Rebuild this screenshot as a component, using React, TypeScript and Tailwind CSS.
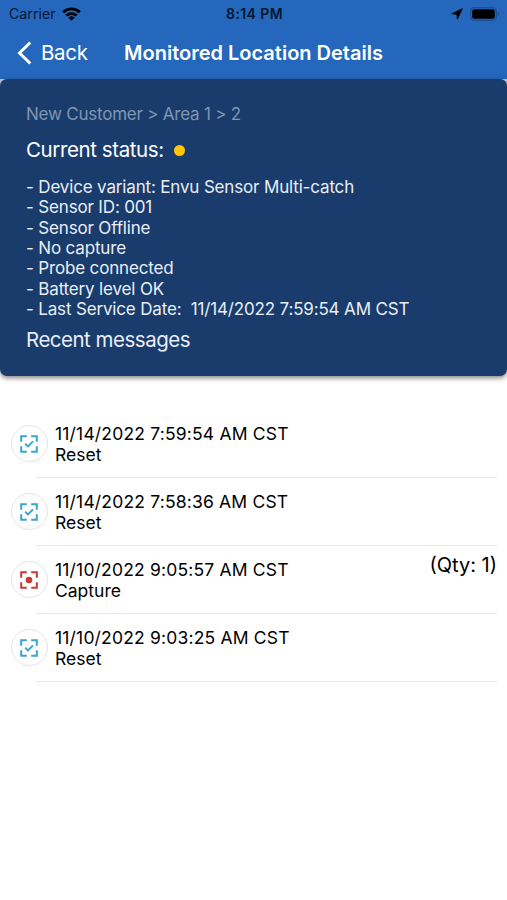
interface Message {
    id: number;
    time: string;
    type: 'Reset' | 'Capture';
    qty?: number;
}

const details = [
    'Device variant: Envu Sensor Multi-catch',
    'Sensor ID: 001',
    'Sensor Offline',
    'No capture',
    'Probe connected',
    'Battery level OK',
    'Last Service Date:  11/14/2022 7:59:54 AM CST',
];

const messages: Message[] = [
    { id: 1, time: '11/14/2022 7:59:54 AM CST', type: 'Reset' },
    { id: 2, time: '11/14/2022 7:58:36 AM CST', type: 'Reset' },
    { id: 3, time: '11/10/2022 9:05:57 AM CST', type: 'Capture', qty: 1 },
    { id: 4, time: '11/10/2022 9:03:25 AM CST', type: 'Reset' },
];

function StatusBar() {
    return (
        <div className="grid h-[27px] grid-cols-3 items-center pl-[9px] pr-[7px] text-black">
            <div className="flex items-center gap-[6px]">
                <span className="text-[14px] leading-[18px] tracking-[0.1px] text-[#06182f]">Carrier</span>
                <svg className="h-[14px] w-[19px]" viewBox="0 0 19 14" fill="none" stroke="currentColor" strokeWidth="2.7">
                    <path d="M1.2 5.2a12 12 0 0 1 16.6 0" />
                    <path d="M4.3 8.6a7.6 7.6 0 0 1 10.4 0" />
                    <path d="M9.5 13.8 6.4 10.7a4.5 4.5 0 0 1 6.2 0z" fill="currentColor" stroke="none" />
                </svg>
            </div>
            <span className="text-center text-[14px] font-semibold leading-[18px] tracking-[0.4px] text-[#06182f]">8:14 PM</span>
            <div className="flex items-center justify-end gap-[7px]">
                <svg className="h-3 w-3" viewBox="0 0 12 12" fill="currentColor" stroke="currentColor" strokeWidth=".8" strokeLinejoin="round">
                    <path d="M11.3.7.8 5.8l5.1.4.5 5z" />
                </svg>
                <svg className="h-[14px] w-[30px]" viewBox="0 0 30 14">
                    <rect x=".7" y=".7" width="25.6" height="12.6" rx="3.5" fill="none" stroke="#1b4f94" strokeWidth="1.2" />
                    <rect x="2.2" y="2.2" width="22.6" height="9.6" rx="2" fill="#000" />
                    <path d="M27.6 4.8c1.9.8 1.9 3.6 0 4.4z" fill="#1b4f94" />
                </svg>
            </div>
        </div>
    );
}

function MessageIcon({ type }: { type: Message['type'] }) {
    const color = type === 'Reset' ? 'text-[#3ba3d0]' : 'text-[#c83a32]';
    return (
        <div className={`flex h-[37px] w-[37px] shrink-0 items-center justify-center rounded-full border border-[#e4e4e4] bg-white ${color}`}>
            <svg className="h-[18px] w-[18px]" viewBox="0 0 18 18" fill="none" stroke="currentColor" strokeWidth="2">
                <path d="M1.2 6.8V1.2h5.6M11.2 1.2h5.6v5.6M16.8 11.2v5.6h-5.6M6.8 16.8H1.2v-5.6" />
                {type === 'Reset' ? (
                    <path d="m5.2 8.8 2.8 2.6 5-5" />
                ) : (
                    <circle cx="9" cy="9" r="3.3" fill="currentColor" stroke="none" />
                )}
            </svg>
        </div>
    );
}

export default function App() {
    return (
        <div className="min-h-[900px] bg-white font-['Inter','Liberation_Sans',sans-serif]">
            <header className="h-[79px] bg-[#2467bc]">
                <StatusBar />
                <div className="grid h-[51px] grid-cols-[1fr_auto_1fr] items-center text-white">
                    <button className="flex items-center gap-[9px] pl-[17px] text-[20.5px] leading-[26px] tracking-[-0.3px]">
                        <svg className="h-6 w-[15px]" viewBox="0 0 15 24" fill="none" stroke="currentColor" strokeWidth="3">
                            <path d="M13.3 1.5 2.5 12l10.8 10.5" />
                        </svg>
                        Back
                    </button>
                    <h1 className="text-[20px] font-semibold tracking-[0px]">Monitored Location Details</h1>
                </div>
            </header>

            <div className="bg-[linear-gradient(#b9c6d8_50%,#fff_50%)]">
                <section className="h-[297px] rounded-[7px] bg-[#193c6d] px-[26px] pt-[24px] text-[#e9eef5] shadow-[0_2px_5px_rgba(0,0,0,0.5)]">
                    <p className="text-[17px] leading-[22px] tracking-[-0.22px] text-[#8095b1]">New Customer &gt; Area 1 &gt; 2</p>
                    <div className="mt-[12px] flex items-center gap-[10px] text-[20.5px] leading-[26px] tracking-[-0.4px] text-white">
                        <h2>Current status:</h2>
                        <span className="h-[11px] w-[11px] rounded-full bg-[#ffc60a]" />
                    </div>
                    <ul className="mt-[14px] text-[17px] leading-[20.35px] tracking-[-0.16px]">
                        {details.map(line => (
                            <li key={line} className="whitespace-pre">- {line}</li>
                        ))}
                    </ul>
                    <h2 className="mt-[8px] text-[20.5px] leading-[26px] tracking-[-0.5px]">Recent messages</h2>
                </section>
            </div>

            <ul className="pl-[10.5px] pr-[10px] pt-[34px]">
                {messages.map(msg => (
                    <li key={msg.id} className="relative flex h-[68px] items-center gap-[7.5px] pb-px text-black after:absolute after:bottom-0 after:left-[25.5px] after:right-0 after:h-px after:bg-[#e8e8e8]">
                        <MessageIcon type={msg.type} />
                        <div className="text-[17.5px] leading-[21px]">
                            <p className="tracking-[0.18px]">{msg.time}</p>
                            <p>{msg.type}</p>
                        </div>
                        {msg.qty && <span className="mb-[29px] ml-auto text-[20px] leading-[24px]">(Qty: {msg.qty})</span>}
                    </li>
                ))}
            </ul>
        </div>
    );
}
